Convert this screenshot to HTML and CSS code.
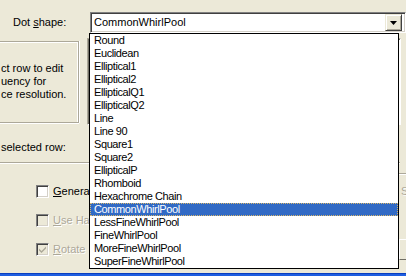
FILE: index.html
```html
<!DOCTYPE html>
<html>

<head>
  <title>Dot Shape</title>
  <link rel="stylesheet" href="styles.css">
</head>

<body>
  <div class="dialog">
    <div class="shape-row">
      <label class="shape-label" for="shape">Dot <u>s</u>hape:</label>
      <div class="combo" id="shape">
        <span class="combo-value">CommonWhirlPool</span>
        <span class="combo-btn">
          <svg width="7" height="4" viewBox="0 0 7 4"><path d="M0 0H7L3.5 4Z" fill="#000"/></svg>
        </span>
      </div>
    </div>

    <div class="middle">
      <div class="note-box">
        <p>ct row to edit<br>uency for<br>ce resolution.</p>
      </div>
      <div class="list-view"></div>
    </div>

    <div class="selected-label">selected row:</div>
    <div class="sep"></div>

    <div class="options">
      <div class="checks">
        <label class="check"><span class="box"></span><span><u>G</u>enera</span></label>
        <label class="check disabled"><span class="box"></span><span><u>U</u>se Ha</span></label>
        <label class="check disabled"><span class="box checked">
          <svg width="7" height="7" viewBox="0 0 7 7"><path d="M0 2.5L2.5 5L7 0.5V2.5L2.5 7L0 4.5Z" fill="#ACA899"/></svg>
        </span><span><u>R</u>otate</span></label>
      </div>
      <div class="side">
        <span class="side-text">S</span>
        <div class="side-btn"></div>
      </div>
    </div>
  </div>

  <ul class="dropdown">
    <li>Round</li>
    <li>Euclidean</li>
    <li>Elliptical1</li>
    <li>Elliptical2</li>
    <li>EllipticalQ1</li>
    <li>EllipticalQ2</li>
    <li>Line</li>
    <li>Line 90</li>
    <li>Square1</li>
    <li>Square2</li>
    <li>EllipticalP</li>
    <li>Rhomboid</li>
    <li>Hexachrome Chain</li>
    <li class="selected">CommonWhirlPool</li>
    <li>LessFineWhirlPool</li>
    <li>FineWhirlPool</li>
    <li>MoreFineWhirlPool</li>
    <li>SuperFineWhirlPool</li>
  </ul>

  <div class="taskbar"></div>
</body>

</html>
```

FILE: styles.css
```css
* {
  box-sizing: border-box;
}

body {
  margin: 0;
  width: 406px;
  height: 276px;
  overflow: hidden;
  position: relative;
  background: #ece9d8;
  font-family: "Liberation Sans", Arial, sans-serif;
  font-size: 11px;
  line-height: 13px;
  color: #000;
}

.dialog {
  display: flex;
  flex-direction: column;
}

.shape-row {
  display: flex;
  align-items: center;
  padding-top: 12px;
}

.shape-label {
  width: 90px;
  padding-left: 13px;
}

.combo {
  display: flex;
  align-items: center;
  width: 316px;
  height: 21px;
  flex-shrink: 0;
  background: #fff;
  border: 1px solid;
  border-color: #808080 #fff #fff #808080;
  box-shadow: inset 1px 1px 0 #404040, inset -1px -1px 0 #d4d0c8;
  padding: 0 2px 0 3px;
}

.combo-value {
  flex: 1;
}

.combo-btn {
  display: flex;
  align-items: center;
  justify-content: center;
  width: 17px;
  height: 17px;
  margin-right: 1px;
  background: #ece9d8;
  border: 1px solid;
  border-color: #ece9d8 #404040 #404040 #ece9d8;
  box-shadow: inset 1px 1px 0 #fff, inset -1px -1px 0 #aca899;
}

.middle {
  display: flex;
  align-items: flex-start;
  margin-top: 5px;
  height: 87px;
}

.note-box {
  width: 79px;
  height: 82px;
  margin-top: 3px;
  border: 1px solid #aca899;
  border-left: none;
  box-shadow: 0 1px 0 #fff, 1px 0 0 #fff, inset 0 1px 0 #fff, inset -1px 0 0 #fff;
}

.note-box p {
  margin: 20px 0 0 1px;
  white-space: nowrap;
}

.list-view {
  width: 314px;
  height: 87px;
  margin-left: 8px;
  background: #fff;
  border: 1px solid;
  border-color: #aca899 #fff #fff #aca899;
  box-shadow: inset 1px 1px 0 #716f64;
}

.selected-label {
  margin-top: 16px;
  padding-left: 1px;
}

.sep {
  margin-top: 8px;
  height: 2px;
  width: 400px;
  border-top: 1px solid #aca899;
  border-bottom: 1px solid #fff;
}

.options {
  display: flex;
  justify-content: space-between;
}

.checks {
  display: flex;
  flex-direction: column;
  gap: 16px;
  padding: 21px 0 0 36px;
}

.check {
  display: flex;
  align-items: center;
  gap: 4px;
  height: 13px;
  white-space: nowrap;
}

.box {
  display: flex;
  align-items: center;
  justify-content: center;
  width: 13px;
  height: 13px;
  background: #fff;
  border: 1px solid;
  border-color: #808080 #fff #fff #808080;
  box-shadow: inset 1px 1px 0 #404040, inset -1px -1px 0 #d4d0c8;
}

.disabled {
  color: #aca899;
  text-shadow: 1px 1px 0 #fff;
}

.disabled .box {
  background: #ece9d8;
}

.side {
  width: 7px;
  margin-top: 9px;
  display: flex;
  flex-direction: column;
  border-top: 1px solid #aca899;
  box-shadow: inset 0 1px 0 #fff;
}

.side-text {
  margin-top: 11px;
  padding-left: 2px;
  color: #aca899;
  text-shadow: 1px 1px 0 #fff;
}

.side-btn {
  margin-top: 41px;
  height: 21px;
  border-top: 1px solid #fff;
  border-left: 1px solid #fff;
  border-bottom: 1px solid #716f64;
}

.dropdown {
  position: absolute;
  left: 89px;
  top: 33px;
  width: 310px;
  margin: 0;
  padding: 0;
  list-style: none;
  background: #fff;
  border: 1px solid #000;
  letter-spacing: -0.4px;
}

.dropdown li {
  height: 13px;
  padding-left: 4px;
  white-space: nowrap;
}

.dropdown .selected {
  background: #316ac5;
  color: #fff;
  outline: 1px dotted #d8b66a;
  outline-offset: -1px;
}

.taskbar {
  position: absolute;
  left: 0;
  right: 0;
  bottom: 0;
  height: 3px;
  background: #1f5ee0;
  border-top: 1px solid #0a3fc0;
}
```
